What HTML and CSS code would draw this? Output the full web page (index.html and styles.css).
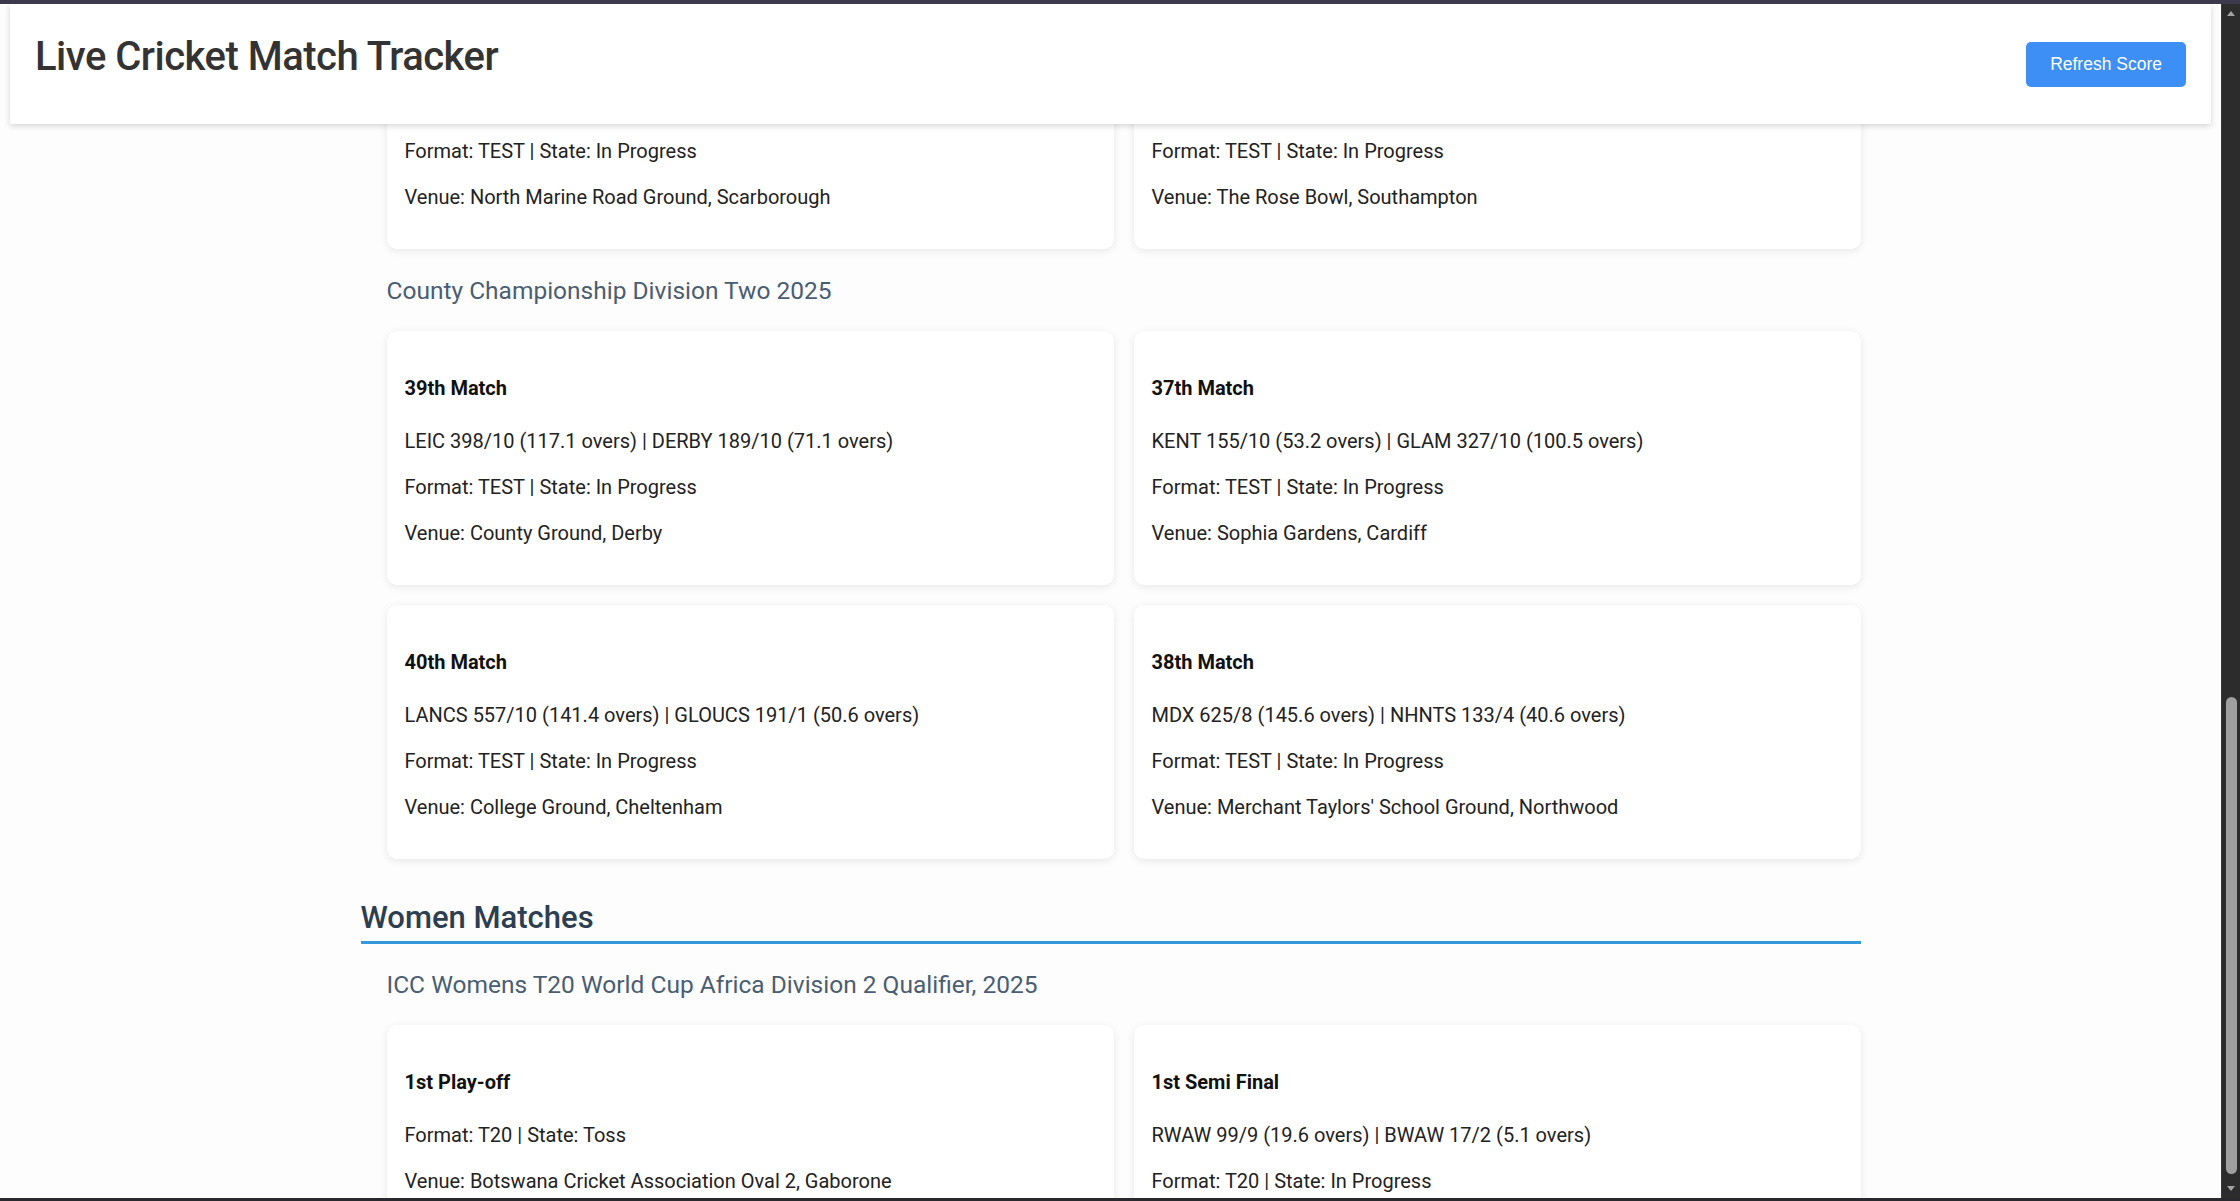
FILE: index.html
```html
<!DOCTYPE html>
<html lang="en">
<head>
<meta charset="utf-8">
<title>Live Cricket Match Tracker</title>
<link rel="stylesheet" href="styles.css">
</head>
<body>
<div class="chrome-top"></div>
<div class="window">
  <div class="viewport">
    <header class="app-header">
      <h1 class="app-title">Live Cricket Match Tracker</h1>
      <button class="refresh-btn" type="button">Refresh Score</button>
    </header>
    <main class="container">
      <section class="tournament">
        <div class="match-grid">
          <article class="match-card match-card--cut">
            <p>Format: TEST | State: In Progress</p>
            <p>Venue: North Marine Road Ground, Scarborough</p>
          </article>
          <article class="match-card match-card--cut">
            <p>Format: TEST | State: In Progress</p>
            <p>Venue: The Rose Bowl, Southampton</p>
          </article>
        </div>
      </section>

      <section class="tournament">
        <h3 class="tournament-title">County Championship Division Two 2025</h3>
        <div class="match-grid">
          <article class="match-card">
            <h4 class="match-title">39th Match</h4>
            <p>LEIC 398/10 (117.1 overs) | DERBY 189/10 (71.1 overs)</p>
            <p>Format: TEST | State: In Progress</p>
            <p>Venue: County Ground, Derby</p>
          </article>
          <article class="match-card">
            <h4 class="match-title">37th Match</h4>
            <p>KENT 155/10 (53.2 overs) | GLAM 327/10 (100.5 overs)</p>
            <p>Format: TEST | State: In Progress</p>
            <p>Venue: Sophia Gardens, Cardiff</p>
          </article>
          <article class="match-card">
            <h4 class="match-title">40th Match</h4>
            <p>LANCS 557/10 (141.4 overs) | GLOUCS 191/1 (50.6 overs)</p>
            <p>Format: TEST | State: In Progress</p>
            <p>Venue: College Ground, Cheltenham</p>
          </article>
          <article class="match-card">
            <h4 class="match-title">38th Match</h4>
            <p>MDX 625/8 (145.6 overs) | NHNTS 133/4 (40.6 overs)</p>
            <p>Format: TEST | State: In Progress</p>
            <p>Venue: Merchant Taylors' School Ground, Northwood</p>
          </article>
        </div>
      </section>

      <section class="category">
        <h2 class="category-title">Women Matches</h2>
        <section class="tournament">
          <h3 class="tournament-title tournament-title--first">ICC Womens T20 World Cup Africa Division 2 Qualifier, 2025</h3>
          <div class="match-grid">
            <article class="match-card">
              <h4 class="match-title">1st Play-off</h4>
              <p>Format: T20 | State: Toss</p>
              <p>Venue: Botswana Cricket Association Oval 2, Gaborone</p>
            </article>
            <article class="match-card">
              <h4 class="match-title">1st Semi Final</h4>
              <p>RWAW 99/9 (19.6 overs) | BWAW 17/2 (5.1 overs)</p>
              <p>Format: T20 | State: In Progress</p>
            </article>
          </div>
        </section>
      </section>
    </main>
  </div>
  <div class="scrollbar">
    <div class="sb-arrow"><span class="tri-up"></span></div>
    <div class="sb-track"><div class="sb-thumb"></div></div>
    <div class="sb-arrow"><span class="tri-down"></span></div>
  </div>
</div>
<div class="chrome-bottom"></div>
</body>
</html>
```

FILE: styles.css
```css
* { box-sizing: border-box; }

html, body {
  margin: 0;
  height: 100%;
}

body {
  display: flex;
  flex-direction: column;
  height: 1201px;
  overflow: hidden;
  font-family: Roboto, "Liberation Sans", sans-serif;
  color: #222;
  background: #2a2a2e;
}

.chrome-top {
  height: 4px;
  flex: none;
  background: #3b3a4c;
}

.chrome-bottom {
  height: 3px;
  flex: none;
  background: #2a2a2e;
}

.window {
  flex: 1;
  display: flex;
  min-height: 0;
}

.viewport {
  flex: 1;
  position: relative;
  overflow: hidden;
  background: #fdfdfd;
}

.app-header {
  position: absolute;
  top: 0;
  left: 10px;
  right: 10px;
  height: 120px;
  z-index: 5;
  display: flex;
  align-items: center;
  justify-content: space-between;
  padding: 0 25px;
  background: #fff;
  box-shadow: 0 2px 6px rgba(0, 0, 0, 0.16);
}

.app-title {
  margin: 0 0 15px;
  font-size: 40px;
  line-height: 48px;
  font-weight: 500;
  color: #333;
  letter-spacing: -0.5px;
}

.refresh-btn {
  height: 45px;
  padding: 0 24px;
  border: 0;
  border-radius: 5px;
  background: #3d8ef5;
  color: #fff;
  font-family: "Liberation Sans", Arial, sans-serif;
  font-size: 17.5px;
  line-height: 20px;
}

.container {
  width: 1500px;
  margin: 0 auto;
}

.tournament {
  margin-left: 26px;
}

.tournament-title {
  margin: 26px 0 24px;
  font-size: 24.5px;
  line-height: 32px;
  font-weight: 400;
  color: #4a5d72;
}

.tournament-title--first {
  margin-top: 25px;
}

.match-grid {
  display: grid;
  grid-template-columns: 1fr 1fr;
  gap: 20px;
}

.match-card {
  background: #fff;
  border-radius: 10px;
  box-shadow: 0 2px 8px rgba(0, 0, 0, 0.09);
  padding: 18px 18px 19px;
}

.match-card--cut {
  padding-top: 114px;
}

.match-title {
  margin: 26px 0 27px;
  font-size: 20px;
  line-height: 26px;
  font-weight: 700;
  color: #111;
}

.match-card p {
  margin: 20px 0;
  font-size: 20px;
  line-height: 26px;
  color: #222;
}

.category {
  margin-top: 39px;
}

.category-title {
  margin: 0;
  padding-bottom: 4px;
  border-bottom: 3px solid #3498db;
  font-size: 31px;
  line-height: 39px;
  font-weight: 500;
  color: #2c3e50;
}

/* fake window scrollbar */
.scrollbar {
  width: 19px;
  flex: none;
  display: flex;
  flex-direction: column;
  background: #2c2c2c;
  border-left: 1px solid #3a3a3a;
}

.sb-arrow {
  height: 19px;
  flex: none;
  display: flex;
  align-items: center;
  justify-content: center;
}

.tri-up {
  width: 0;
  height: 0;
  border-left: 4px solid transparent;
  border-right: 4px solid transparent;
  border-bottom: 5px solid #a3a3a3;
}

.tri-down {
  width: 0;
  height: 0;
  border-left: 4px solid transparent;
  border-right: 4px solid transparent;
  border-top: 5px solid #a3a3a3;
}

.sb-track {
  flex: 1;
  display: flex;
  justify-content: center;
}

.sb-thumb {
  width: 11px;
  height: 477px;
  margin-top: 674px;
  border-radius: 6px;
  background: #9f9f9f;
}
```
